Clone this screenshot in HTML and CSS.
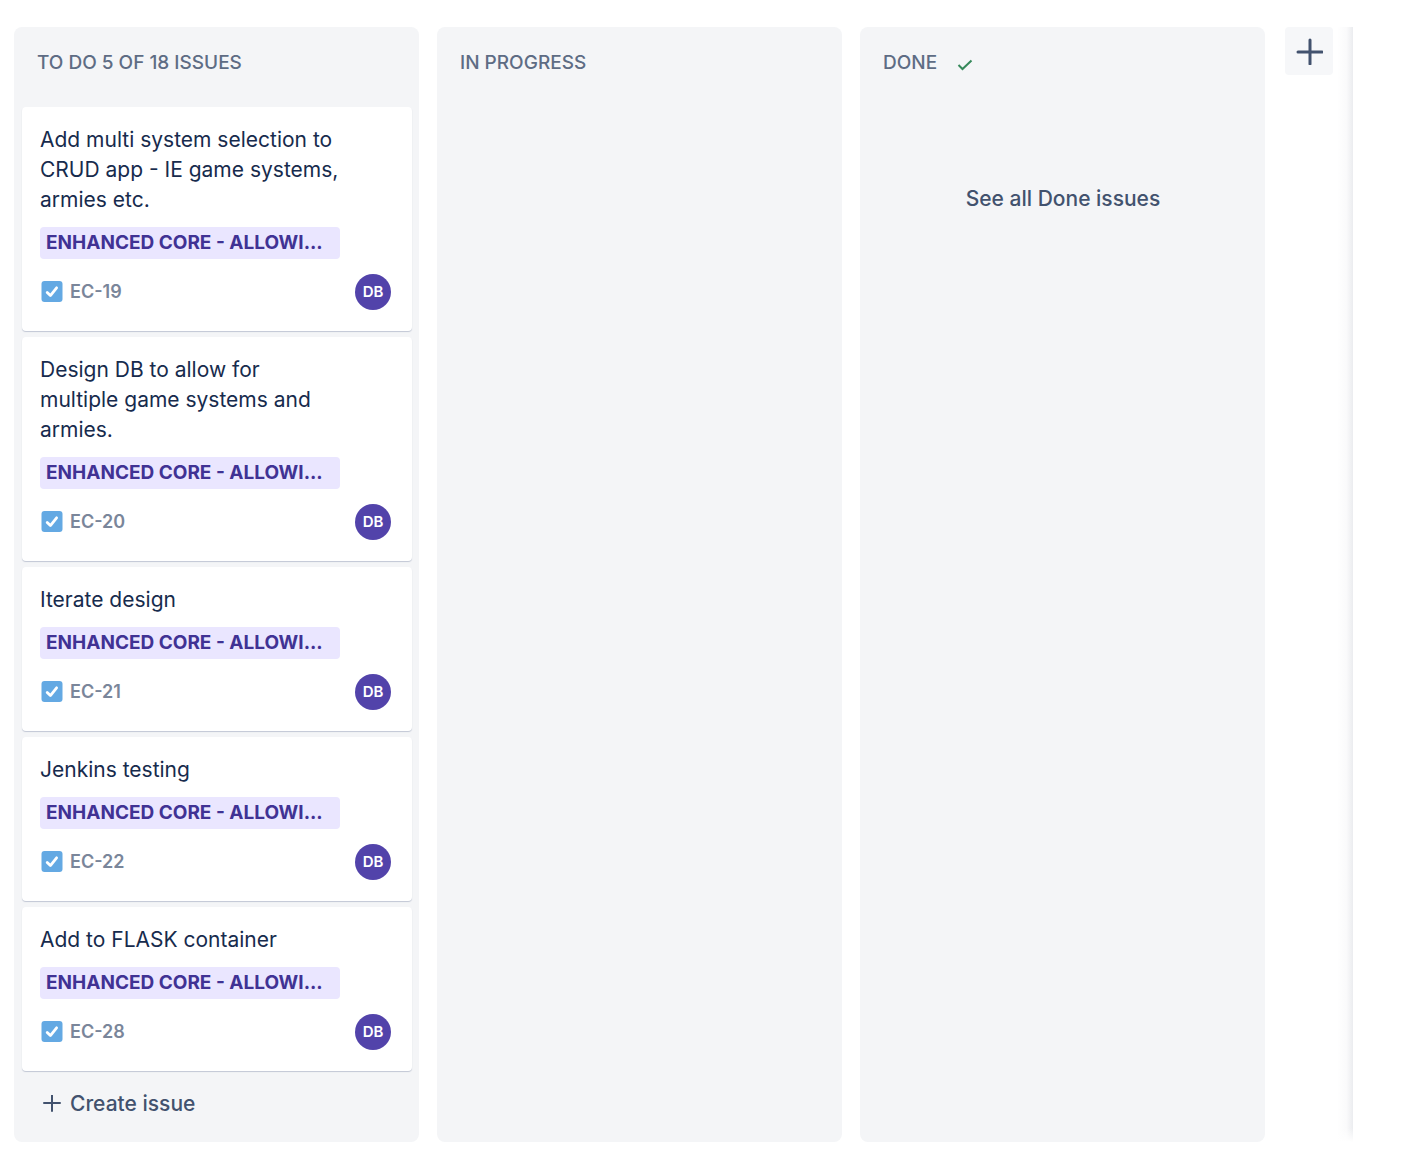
FILE: index.html
```html
<!DOCTYPE html>
<html lang="en">
<head>
<meta charset="utf-8">
<meta name="viewport" content="width=device-width, initial-scale=1">
<title>Board</title>
<link rel="stylesheet" href="styles.css">
</head>
<body>
<svg class="sprite" aria-hidden="true">
  <symbol id="task" viewBox="0 0 22 22">
    <rect x="0.5" width="21" height="21" rx="3" fill="#64a9e3"/>
    <path d="M6.2 11.4L9.4 14.6L15.6 6.8" fill="none" stroke="#fff" stroke-width="2.8" stroke-linecap="round" stroke-linejoin="round"/>
  </symbol>
</svg>
<main class="board">
  <section class="column">
    <h2 class="column-title">TO DO 5 OF 18 ISSUES</h2>
    <div class="cards">
      <article class="card">
        <h3 class="card-title">Add multi system selection to CRUD app - IE game systems, armies etc.</h3>
        <span class="epic">ENHANCED CORE - ALLOWI...</span>
        <div class="card-footer"><svg class="task-icon" aria-hidden="true"><use href="#task"/></svg><a class="key" href="#EC-19">EC-19</a><span class="avatar">DB</span></div>
      </article>
      <article class="card">
        <h3 class="card-title">Design DB to allow for multiple game systems and armies.</h3>
        <span class="epic">ENHANCED CORE - ALLOWI...</span>
        <div class="card-footer"><svg class="task-icon" aria-hidden="true"><use href="#task"/></svg><a class="key" href="#EC-20">EC-20</a><span class="avatar">DB</span></div>
      </article>
      <article class="card">
        <h3 class="card-title">Iterate design</h3>
        <span class="epic">ENHANCED CORE - ALLOWI...</span>
        <div class="card-footer"><svg class="task-icon" aria-hidden="true"><use href="#task"/></svg><a class="key" href="#EC-21">EC-21</a><span class="avatar">DB</span></div>
      </article>
      <article class="card">
        <h3 class="card-title">Jenkins testing</h3>
        <span class="epic">ENHANCED CORE - ALLOWI...</span>
        <div class="card-footer"><svg class="task-icon" aria-hidden="true"><use href="#task"/></svg><a class="key" href="#EC-22">EC-22</a><span class="avatar">DB</span></div>
      </article>
      <article class="card">
        <h3 class="card-title">Add to FLASK container</h3>
        <span class="epic">ENHANCED CORE - ALLOWI...</span>
        <div class="card-footer"><svg class="task-icon" aria-hidden="true"><use href="#task"/></svg><a class="key" href="#EC-28">EC-28</a><span class="avatar">DB</span></div>
      </article>
    </div>
    <button class="create" type="button">
      <svg class="create-icon" viewBox="0 0 18 18" aria-hidden="true"><path d="M9 0V16M1 8H17" fill="none" stroke="#42526e" stroke-width="2" stroke-linecap="round"/></svg>
      Create issue
    </button>
  </section>
  <section class="column">
    <h2 class="column-title">IN PROGRESS</h2>
  </section>
  <section class="column">
    <h2 class="column-title">DONE
      <svg class="done-icon" viewBox="0 0 16 12" aria-hidden="true"><path d="M1.5 6L5.5 10L14.5 1.5" fill="none" stroke="#36895b" stroke-width="2"/></svg>
    </h2>
    <a class="see-all" href="#done">See all Done issues</a>
  </section>
  <button class="add-column" type="button" aria-label="Add column">
    <svg class="add-icon" viewBox="0 0 28 28" aria-hidden="true"><path d="M15 3V27M3 15H27" fill="none" stroke="#42526e" stroke-width="3" stroke-linecap="round"/></svg>
  </button>
  <div class="edge"></div>
</main>
</body>
</html>
```
FILE: styles.css
```css
* {
  box-sizing: border-box;
}

body {
  margin: 0;
  background: #fff;
  color: #172b4d;
  font-family: Inter, "Liberation Sans", sans-serif;
}

h2,
h3 {
  margin: 0;
}

button {
  border: 0;
  font: inherit;
  cursor: pointer;
}

a {
  text-decoration: none;
}

.sprite {
  display: none;
}

.board {
  display: flex;
  min-height: 100vh;
  padding: 27px 49px 30px 14px;
}

.column {
  flex: 1;
  min-width: 0;
  margin-right: 18px;
  padding: 0 7px 0 8px;
  border-radius: 8px;
  background: #f4f5f7;
}

.column-title {
  display: flex;
  align-items: center;
  height: 72px;
  margin-bottom: 8px;
  padding-left: 15px;
  color: #5e6c84;
  font-size: 19px;
  font-weight: 500;
  line-height: 24px;
}

.done-icon {
  width: 16px;
  height: 12px;
  margin: 4px 0 0 20px;
}

.cards {
  display: flex;
  flex-direction: column;
  gap: 6px;
}

.card {
  padding: 18px 21px 21px 18px;
  border-radius: 4px;
  background: #fff;
  box-shadow: 0 1px 1px #c1c7d4;
}

.card-title {
  max-width: 300px;
  font-size: 21px;
  font-weight: 400;
  line-height: 30px;
}

.epic {
  display: block;
  width: 300px;
  max-width: 100%;
  margin: 12px 0 15px;
  padding: 0 6px;
  overflow: hidden;
  border-radius: 4px;
  background: #eae6ff;
  color: #403294;
  font-size: 19px;
  font-weight: 700;
  line-height: 32px;
  white-space: nowrap;
}

.card-footer {
  display: flex;
  align-items: center;
}

.task-icon {
  width: 22px;
  height: 22px;
  margin: 0 7px 0 1px;
}

.key {
  color: #7a869a;
  font-size: 18px;
  font-weight: 600;
  line-height: 24px;
}

.avatar {
  width: 36px;
  height: 36px;
  margin-left: auto;
  border-radius: 50%;
  background: #5243aa;
  color: #fff;
  font-size: 15px;
  font-weight: 600;
  line-height: 36px;
  text-align: center;
}

.create {
  display: flex;
  align-items: center;
  gap: 9px;
  margin-top: 18px;
  padding: 0 21px;
  background: none;
  color: #42526e;
  font-size: 21px;
  font-weight: 500;
  line-height: 30px;
}

.create-icon {
  width: 18px;
  height: 18px;
}

.see-all {
  display: block;
  margin-top: 85px;
  color: #42526e;
  font-size: 21px;
  font-weight: 500;
  line-height: 30px;
  text-align: center;
}

.add-column {
  display: grid;
  place-items: center;
  width: 48px;
  height: 48px;
  margin: 0 4px 0 2px;
  padding: 0;
  border-radius: 4px;
  background: #f6f7f9;
}

.add-icon {
  width: 28px;
  height: 28px;
}

.edge {
  width: 16px;
  background:
    linear-gradient(to bottom, transparent calc(100% - 14px), #fff),
    linear-gradient(to right, #fff, #fafafb 60%, #ebecef);
}
```
